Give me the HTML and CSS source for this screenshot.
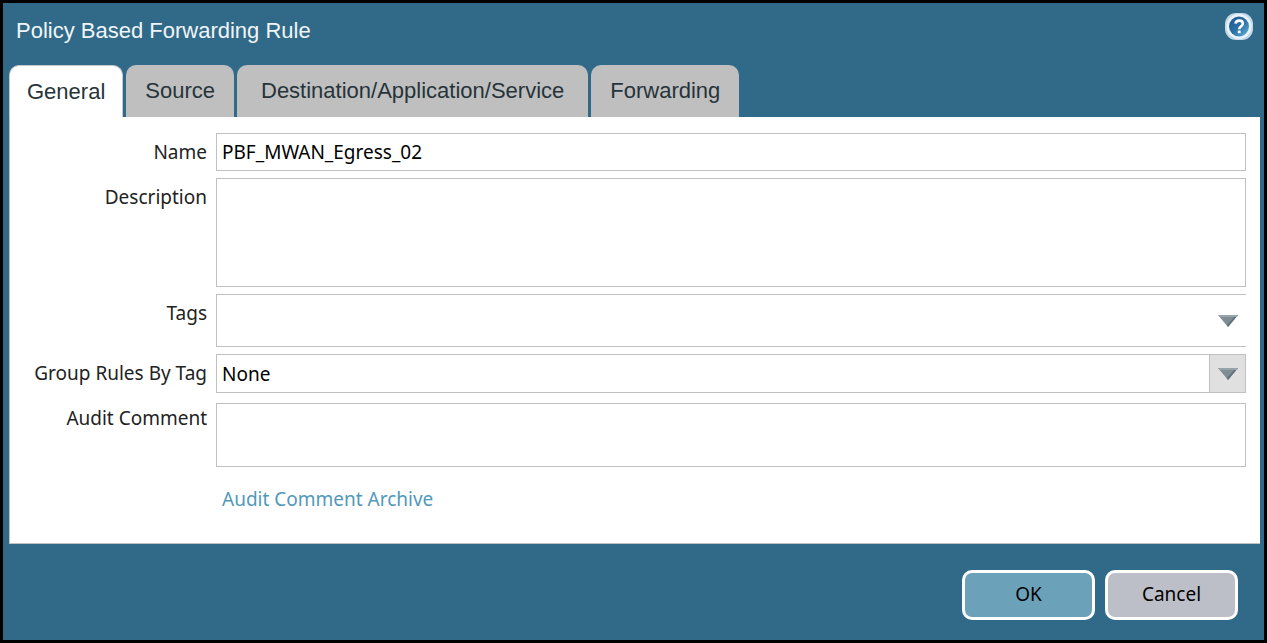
FILE: index.html
```
<!DOCTYPE html>
<html lang="en">
<head>
<meta charset="utf-8">
<title>Policy Based Forwarding Rule</title>
<link rel="stylesheet" href="styles.css">
</head>
<body>
<main class="dialog">
  <header class="titlebar">
    <h1 class="title">Policy Based Forwarding Rule</h1>
    <button class="help" type="button" aria-label="Help">
      <svg viewBox="0 0 28 28" width="28" height="28" aria-hidden="true">
        <defs>
          <linearGradient id="orb" x1="0" y1="0" x2="1" y2="1">
            <stop offset="0" stop-color="#1d5590"/>
            <stop offset="0.5" stop-color="#2b6fa6"/>
            <stop offset="1" stop-color="#62b8d8"/>
          </linearGradient>
        </defs>
        <rect x="0" y="0" width="28" height="27" rx="11" fill="#c3d9ea"/>
        <circle cx="14" cy="13.5" r="12.5" fill="#eaf3fb"/>
        <circle cx="14" cy="13.5" r="10" fill="url(#orb)"/>
        <path d="M10.5 10.6C10.8 8.6 12.2 7.6 14.2 7.6C16.4 7.6 17.8 8.8 17.8 10.7C17.8 13.2 14.2 13.2 14.2 16.2" fill="none" stroke="#fff" stroke-width="2.6"/>
        <rect x="12.8" y="17.6" width="2.8" height="2.6" fill="#fff"/>
      </svg>
    </button>
  </header>

  <nav class="tabs" role="tablist">
    <button class="tab tab-active" type="button" role="tab" aria-selected="true">General</button>
    <button class="tab" type="button" role="tab" aria-selected="false">Source</button>
    <button class="tab tab-wide" type="button" role="tab" aria-selected="false">Destination/Application/Service</button>
    <button class="tab" type="button" role="tab" aria-selected="false">Forwarding</button>
  </nav>

  <form class="panel">
    <label class="label" for="name">Name</label>
    <input class="field field-name" id="name" type="text" value="PBF_MWAN_Egress_02">

    <label class="label" for="description">Description</label>
    <textarea class="field field-description" id="description"></textarea>

    <label class="label" for="tags">Tags</label>
    <div class="combo">
      <select class="field field-tags" id="tags"><option></option></select>
      <span class="trigger">
        <svg viewBox="0 0 20 12" width="20" height="12" aria-hidden="true">
          <path d="M0 0H20L10 12Z" fill="#7f8d95"/><path d="M20 0L10 12L9 10L17 1Z" fill="#5f717d"/><path d="M0 0H20L19 2H2Z" fill="#98a4aa"/>
        </svg>
      </span>
    </div>

    <label class="label" for="group">Group Rules By Tag</label>
    <div class="combo">
      <select class="field field-group" id="group"><option>None</option></select>
      <span class="trigger trigger-boxed">
        <svg viewBox="0 0 20 12" width="20" height="12" aria-hidden="true">
          <path d="M0 0H20L10 12Z" fill="#7f8d95"/><path d="M20 0L10 12L9 10L17 1Z" fill="#5f717d"/><path d="M0 0H20L19 2H2Z" fill="#98a4aa"/>
        </svg>
      </span>
    </div>

    <label class="label label-audit" for="audit">Audit Comment</label>
    <textarea class="field field-audit" id="audit"></textarea>

    <a class="archive" href="#archive">Audit Comment Archive</a>
  </form>

  <footer class="actions">
    <button class="button button-ok" type="button">OK</button>
    <button class="button" type="button">Cancel</button>
  </footer>
</main>
</body>
</html>
```
FILE: styles.css
```
* {
  box-sizing: border-box;
}

body {
  margin: 0;
  font: 19px/26px "Noto Sans", sans-serif;
  color: #222;
}

button,
input,
select,
textarea {
  font: inherit;
  color: #000;
}

.dialog {
  display: flex;
  flex-direction: column;
  min-height: 100vh;
  padding: 0 4px 0 6px;
  border: 3px solid #000;
  background: #306a88;
}

.titlebar {
  display: flex;
  justify-content: space-between;
  align-items: flex-start;
  height: 62px;
  padding: 10px 7px 0;
}

.title {
  margin: 0;
  font: 22px/36px "Liberation Sans Narrow", "Liberation Sans", sans-serif;
  color: #f0f5f8;
}

.help {
  display: flex;
  padding: 0;
  border: 0;
  background: none;
}

.tabs {
  display: flex;
  gap: 3px;
}

.tab {
  height: 52px;
  padding: 0 19px;
  border: 0;
  border-radius: 10px 10px 0 0;
  background: #bfbfbf;
  font: 22px/32px "Liberation Sans Narrow", "Liberation Sans", sans-serif;
  color: #26343a;
}

.tab-active {
  padding: 0 17px;
  border: 1px solid #c4c8ca;
  border-bottom: 0;
  background: #fff;
}

.tab-wide {
  padding: 0 24px;
}

.panel {
  display: grid;
  grid-template-columns: 197px 1fr;
  column-gap: 9px;
  row-gap: 7px;
  padding: 16px 14px 31px 0;
  border: solid #c0c0c0;
  border-width: 0 0 1px 1px;
  background: #fff;
}

.label {
  padding-top: 6px;
  text-align: right;
}

.field {
  display: block;
  width: 100%;
  margin: 0;
  padding: 0 5px;
  border: 1px solid #c0c0c0;
  border-radius: 0;
  background: #fff;
  resize: none;
  appearance: none;
}

.field-name {
  height: 38px;
}

.field-description {
  height: 109px;
}

.field-tags {
  height: 53px;
  border-right: 0;
}

.field-group {
  height: 39px;
}

.field-audit {
  height: 64px;
  margin-top: 3px;
}

.label-audit {
  padding-top: 5px;
}

.combo {
  position: relative;
}

.trigger {
  position: absolute;
  top: 0;
  right: 0;
  display: flex;
  align-items: center;
  justify-content: center;
  width: 37px;
  height: 100%;
  pointer-events: none;
}

.trigger-boxed {
  border: 1px solid #c0c0c0;
  background: #e0e0e0;
}

.archive {
  grid-column: 2;
  justify-self: start;
  padding: 12px 6px 0;
  color: #5199b9;
  text-decoration: none;
}

.actions {
  display: flex;
  justify-content: flex-end;
  gap: 10px;
  padding: 26px 22px 20px;
}

.button {
  width: 133px;
  height: 50px;
  padding: 0 0 2px;
  border: 3px solid #fff;
  border-radius: 10px;
  background: #bcbfc8;
}

.button-ok {
  background: #6ca2b9;
}
```
